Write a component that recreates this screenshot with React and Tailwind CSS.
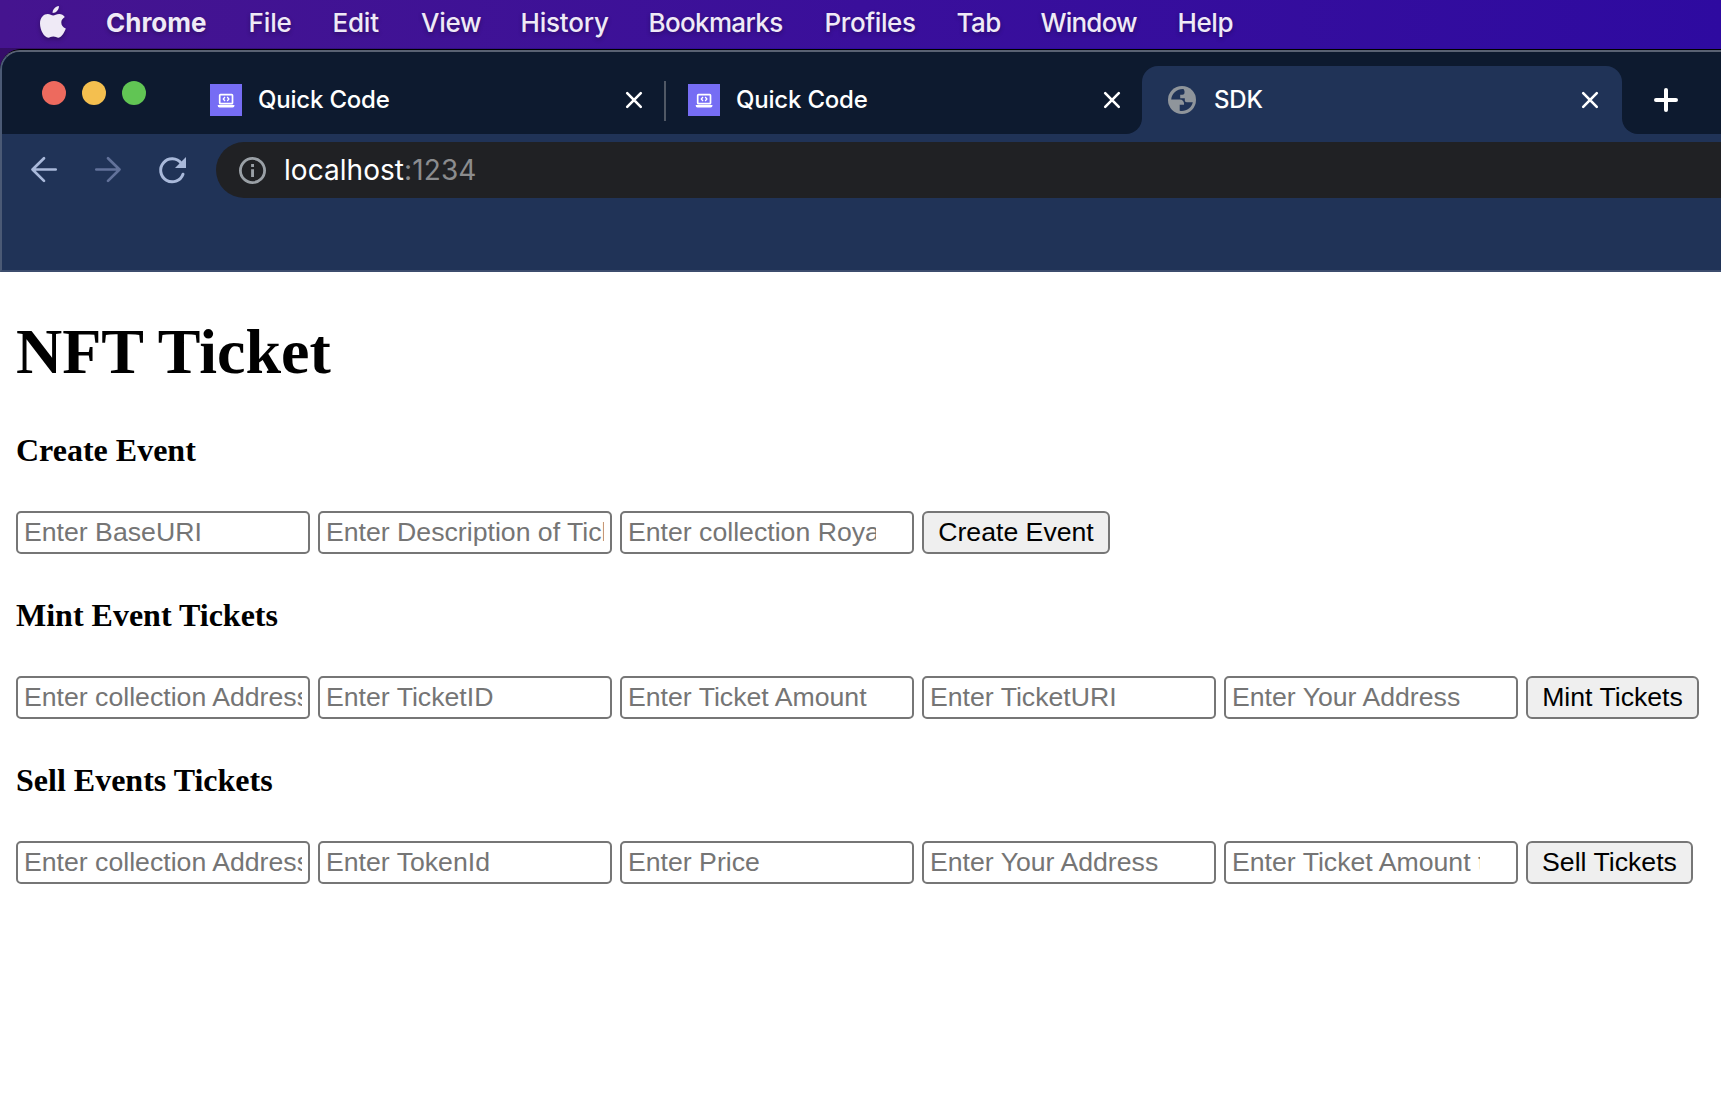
const menus = [
  ['Chrome', 'w-[142.5px] font-bold'],
  ['File', 'w-[84px] font-medium tracking-[-0.1px]'],
  ['Edit', 'w-[88.5px] font-medium tracking-[-0.2px]'],
  ['View', 'w-[99.5px] font-medium tracking-[-0.3px]'],
  ['History', 'w-[128px] font-medium tracking-[-0.2px]'],
  ['Bookmarks', 'w-[176px] font-medium tracking-[-0.65px]'],
  ['Profiles', 'w-[132px] font-medium tracking-[-0.4px]'],
  ['Tab', 'w-[84px] font-medium tracking-[-0.5px]'],
  ['Window', 'w-[137px] font-medium tracking-[-0.8px]'],
  ['Help', 'w-[80px] font-medium tracking-[-0.4px]'],
];

const sections = [
  {
    title: 'Create Event',
    fields: ['Enter BaseURI', 'Enter Description of Ticket', { text: 'Enter collection Royalty', spinner: true }],
    button: 'Create Event',
    width: 'w-[188px]',
  },
  {
    title: 'Mint Event Tickets',
    fields: ['Enter collection Address', 'Enter TicketID', 'Enter Ticket Amount', 'Enter TicketURI', 'Enter Your Address'],
    button: 'Mint Tickets',
    width: 'w-[173px]',
  },
  {
    title: 'Sell Events Tickets',
    fields: ['Enter collection Address', 'Enter TokenId', 'Enter Price', 'Enter Your Address', { text: 'Enter Ticket Amount to sell', spinner: true }],
    button: 'Sell Tickets',
    width: 'w-[167px]',
  },
];

function Apple() {
  return (
    <svg viewBox="0 0 26 32" className="h-8 w-[26px] shrink-0 overflow-visible drop-shadow-[0_2px_2px_rgba(0,0,0,0.3)]" fill="#efeaf6">
      <path d="M18.9 0c.3 3.600-2.700 7-6.300 7C12.300 3.600 15.300.5 18.900 0Z" />
      <path d="M24.800 11.100c-2.200 1.400-3.500 3.200-3.500 5.500 0 2.700 1.600 4.900 4.500 6-.9 2.800-3.800 8.900-7.200 9.100-1.900.1-2.900-1.100-5.300-1.100s-3.300 1.100-5 1.100C4.300 31.600 0 24.400 0 17.600 0 11.400 4 8.100 7.700 8.100c2.300 0 3.900 1.400 5.500 1.400 1.500 0 3.300-1.500 6.100-1.500 2.200 0 4.200 1.200 5.500 3.100Z" />
    </svg>
  );
}

function LaptopIcon() {
  return (
    <svg viewBox="0 0 32 32" className="size-8 shrink-0 bg-[#766df4]" fill="none" stroke="#fff">
      <rect x="9.700" y="10.700" width="12.800" height="9" rx="0.800" strokeWidth="1.700" />
      <path d="M15 13 13.300 15l1.700 2M17.200 13l1.700 2-1.700 2" strokeWidth="1.300" />
      <path d="M7.700 20.900h16.800c0 1.700-.7 2.500-1.900 2.500h-13c-1.200 0-1.900-.8-1.900-2.500Z" fill="#fff" stroke="none" />
    </svg>
  );
}

function Close() {
  return (
    <svg viewBox="0 0 16 16" className="size-4 shrink-0 overflow-visible" stroke="#fff" strokeWidth="2.600" strokeLinecap="round">
      <path d="m1.200 1.200 13.600 13.600M14.800 1.200 1.200 14.800" />
    </svg>
  );
}

function Globe() {
  return (
    <svg viewBox="0 0 28 28" className="mr-[2px] size-7 shrink-0">
      <circle cx="14" cy="14" r="14" fill="#8f959b" />
      <path d="M15.500 3.100C9 2.800 3.900 7.500 3.200 13.500h8.600c2.600 0 4.200 1.700 4.200 4v1.200h-4.300v6c5.900 1.200 12-2.600 13.100-8.500h-6c-1.300 0-2-.8-2-2v-2h-4.600V8.800h2.100c1.400 0 2.200-.8 2.200-2.200V4.900Z" fill="#203357" />
    </svg>
  );
}

function Tab({ title, icon }) {
  return (
    <div className="flex h-8 grow items-center gap-4">
      {icon}
      <span className="grow whitespace-nowrap text-[24px] font-medium leading-8 tracking-[-0.2px] text-white">{title}</span>
      <Close />
    </div>
  );
}

function TabStrip() {
  return (
    <div className="flex h-[82px] shrink-0 bg-[#203357]">
      <div className="flex w-[1140px] shrink-0 rounded-br-[16px] bg-[#0d1a2f]">
        <div className="flex w-[208px] shrink-0 gap-4 pl-10 pt-[29px]">
          <i className="size-6 rounded-full bg-[#ed6a5e]" />
          <i className="size-6 rounded-full bg-[#f4bf4f]" />
          <i className="size-6 rounded-full bg-[#61c554]" />
        </div>
        <div className="flex w-[432px] shrink-0 pt-8">
          <Tab title="Quick Code" icon={<LaptopIcon />} />
        </div>
        <div className="ml-[22px] mt-[29px] h-10 w-[2px] shrink-0 bg-[#505865]" />
        <div className="ml-[22px] flex w-[432px] shrink-0 pt-8">
          <Tab title="Quick Code" icon={<LaptopIcon />} />
        </div>
      </div>
      <div className="w-[480px] shrink-0 bg-[#0d1a2f] pt-[14px]">
        <div className="flex h-[68px] rounded-t-[16px] bg-[#203357] pl-[26px] pr-6 pt-[18px]">
          <Tab title="SDK" icon={<Globe />} />
        </div>
      </div>
      <div className="grow rounded-bl-[16px] bg-[#0d1a2f] pl-8 pt-9">
        <svg viewBox="0 0 24 24" className="size-6" stroke="#fff" strokeWidth="4" strokeLinecap="round">
          <path d="M12 2v20M2 12h20" />
        </svg>
      </div>
    </div>
  );
}

function Toolbar() {
  return (
    <div className="flex h-[72px] shrink-0 items-center pl-[29px]">
      <svg viewBox="0 0 26 26" className="size-[26px] shrink-0 overflow-visible" fill="none" stroke="#a9b9da" strokeWidth="2.700" strokeLinecap="round" strokeLinejoin="round">
        <path d="M24.700 12.500H1.500M13 1.300 1.500 12.500 13 23.900" />
      </svg>
      <svg viewBox="0 0 26 26" className="ml-[38px] size-[26px] shrink-0 overflow-visible" fill="none" stroke="#62729a" strokeWidth="2.700" strokeLinecap="round" strokeLinejoin="round">
        <path d="M1.300 12.500h23.200M13 1.300l11.500 11.200L13 23.900" />
      </svg>
      <svg viewBox="0 0 27 27" className="ml-[38px] h-[27px] w-[27px] shrink-0 overflow-visible" fill="none">
        <path d="M22.300 6.300A11.500 11.500 0 1 0 24 17.200" stroke="#a9b9da" strokeWidth="3" strokeLinecap="round" />
        <path d="M27 0v11H16Z" fill="#a9b9da" />
      </svg>
      <div className="ml-[30px] flex h-14 grow items-center rounded-l-full bg-[#202124] pl-[23px]">
        <svg viewBox="0 0 27 27" className="mr-[18px] size-[27px] shrink-0" fill="none">
          <circle cx="13.500" cy="13.500" r="12.100" stroke="#9aa0a6" strokeWidth="2.800" />
          <path d="M12.100 7h2.900v2.900h-2.900ZM12.100 12.200h2.900v7.900h-2.900Z" fill="#9aa0a6" />
        </svg>
        <span className="whitespace-nowrap text-[28px] leading-8 text-white">
          <span className="tracking-[0.05px]">localhost</span>
          <span className="tracking-[0.1px] text-[#8b8c8e]">:1234</span>
        </span>
      </div>
    </div>
  );
}

function Field({ field }) {
  const text = field.text || field;
  return (
    <div className="h-[43px] w-[294px] shrink-0 rounded-[5px] border-2 border-[#767676] bg-white px-[6px]">
      <input
        placeholder={text}
        className={
          (field.spinner ? 'w-[248px]' : 'w-full') +
          ' block h-[39px] bg-transparent p-0 text-[26.667px] leading-[39px] outline-none placeholder:text-[#757575]'
        }
      />
    </div>
  );
}

export default function App() {
  return (
    <div className="flex h-[1112px] w-[1721px] flex-col overflow-hidden bg-white">
      <nav className="flex h-12 shrink-0 bg-linear-to-r from-[#45148f] via-[#3a0f9b] to-[#2e0aa0] pl-10 font-['Inter']">
        <div className="w-[66px] shrink-0 pt-[6px]"><Apple /></div>
        {menus.map(([name, cls]) => (
          <span key={name} className={'shrink-0 whitespace-nowrap pt-[7px] text-[26px] leading-8 text-[#efeaf6] [text-shadow:0_2px_4px_rgba(0,0,0,0.3)] ' + cls}>{name}</span>
        ))}
      </nav>
      <div className="shrink-0 bg-linear-to-r from-[#350d68] from-0% to-[#2e0aa0] to-50% pt-px font-['Inter']">
        <div className="rounded-tl-[21px] border-t border-black bg-black">
          <div className="flex h-[222px] flex-col overflow-hidden rounded-tl-[20px] border-y-2 border-l-2 border-t-[#596273] border-l-[#4b5a75] border-b-[#3c4c6d] bg-[#203357]">
            <TabStrip />
            <Toolbar />
          </div>
        </div>
      </div>
      <main className="grow px-4 font-['Liberation_Sans']">
        <h1 className="pt-[43px] font-['Liberation_Serif'] text-[64px] font-bold leading-[74px] text-black">NFT Ticket</h1>
        {sections.map((s) => (
          <section key={s.title} className="h-[165px]">
            <h4 className="pt-[43px] font-['Liberation_Serif'] text-[32px] font-bold leading-[36px] text-black">{s.title}</h4>
            <div className="mt-[43px] flex gap-2">
              {s.fields.map((f, i) => <Field key={i} field={f} />)}
              <button className={'h-[43px] shrink-0 rounded-[6px] border-2 border-[#767676] bg-[#efefef] text-[26.667px] leading-[37px] text-black ' + s.width}>{s.button}</button>
            </div>
          </section>
        ))}
      </main>
    </div>
  );
}
